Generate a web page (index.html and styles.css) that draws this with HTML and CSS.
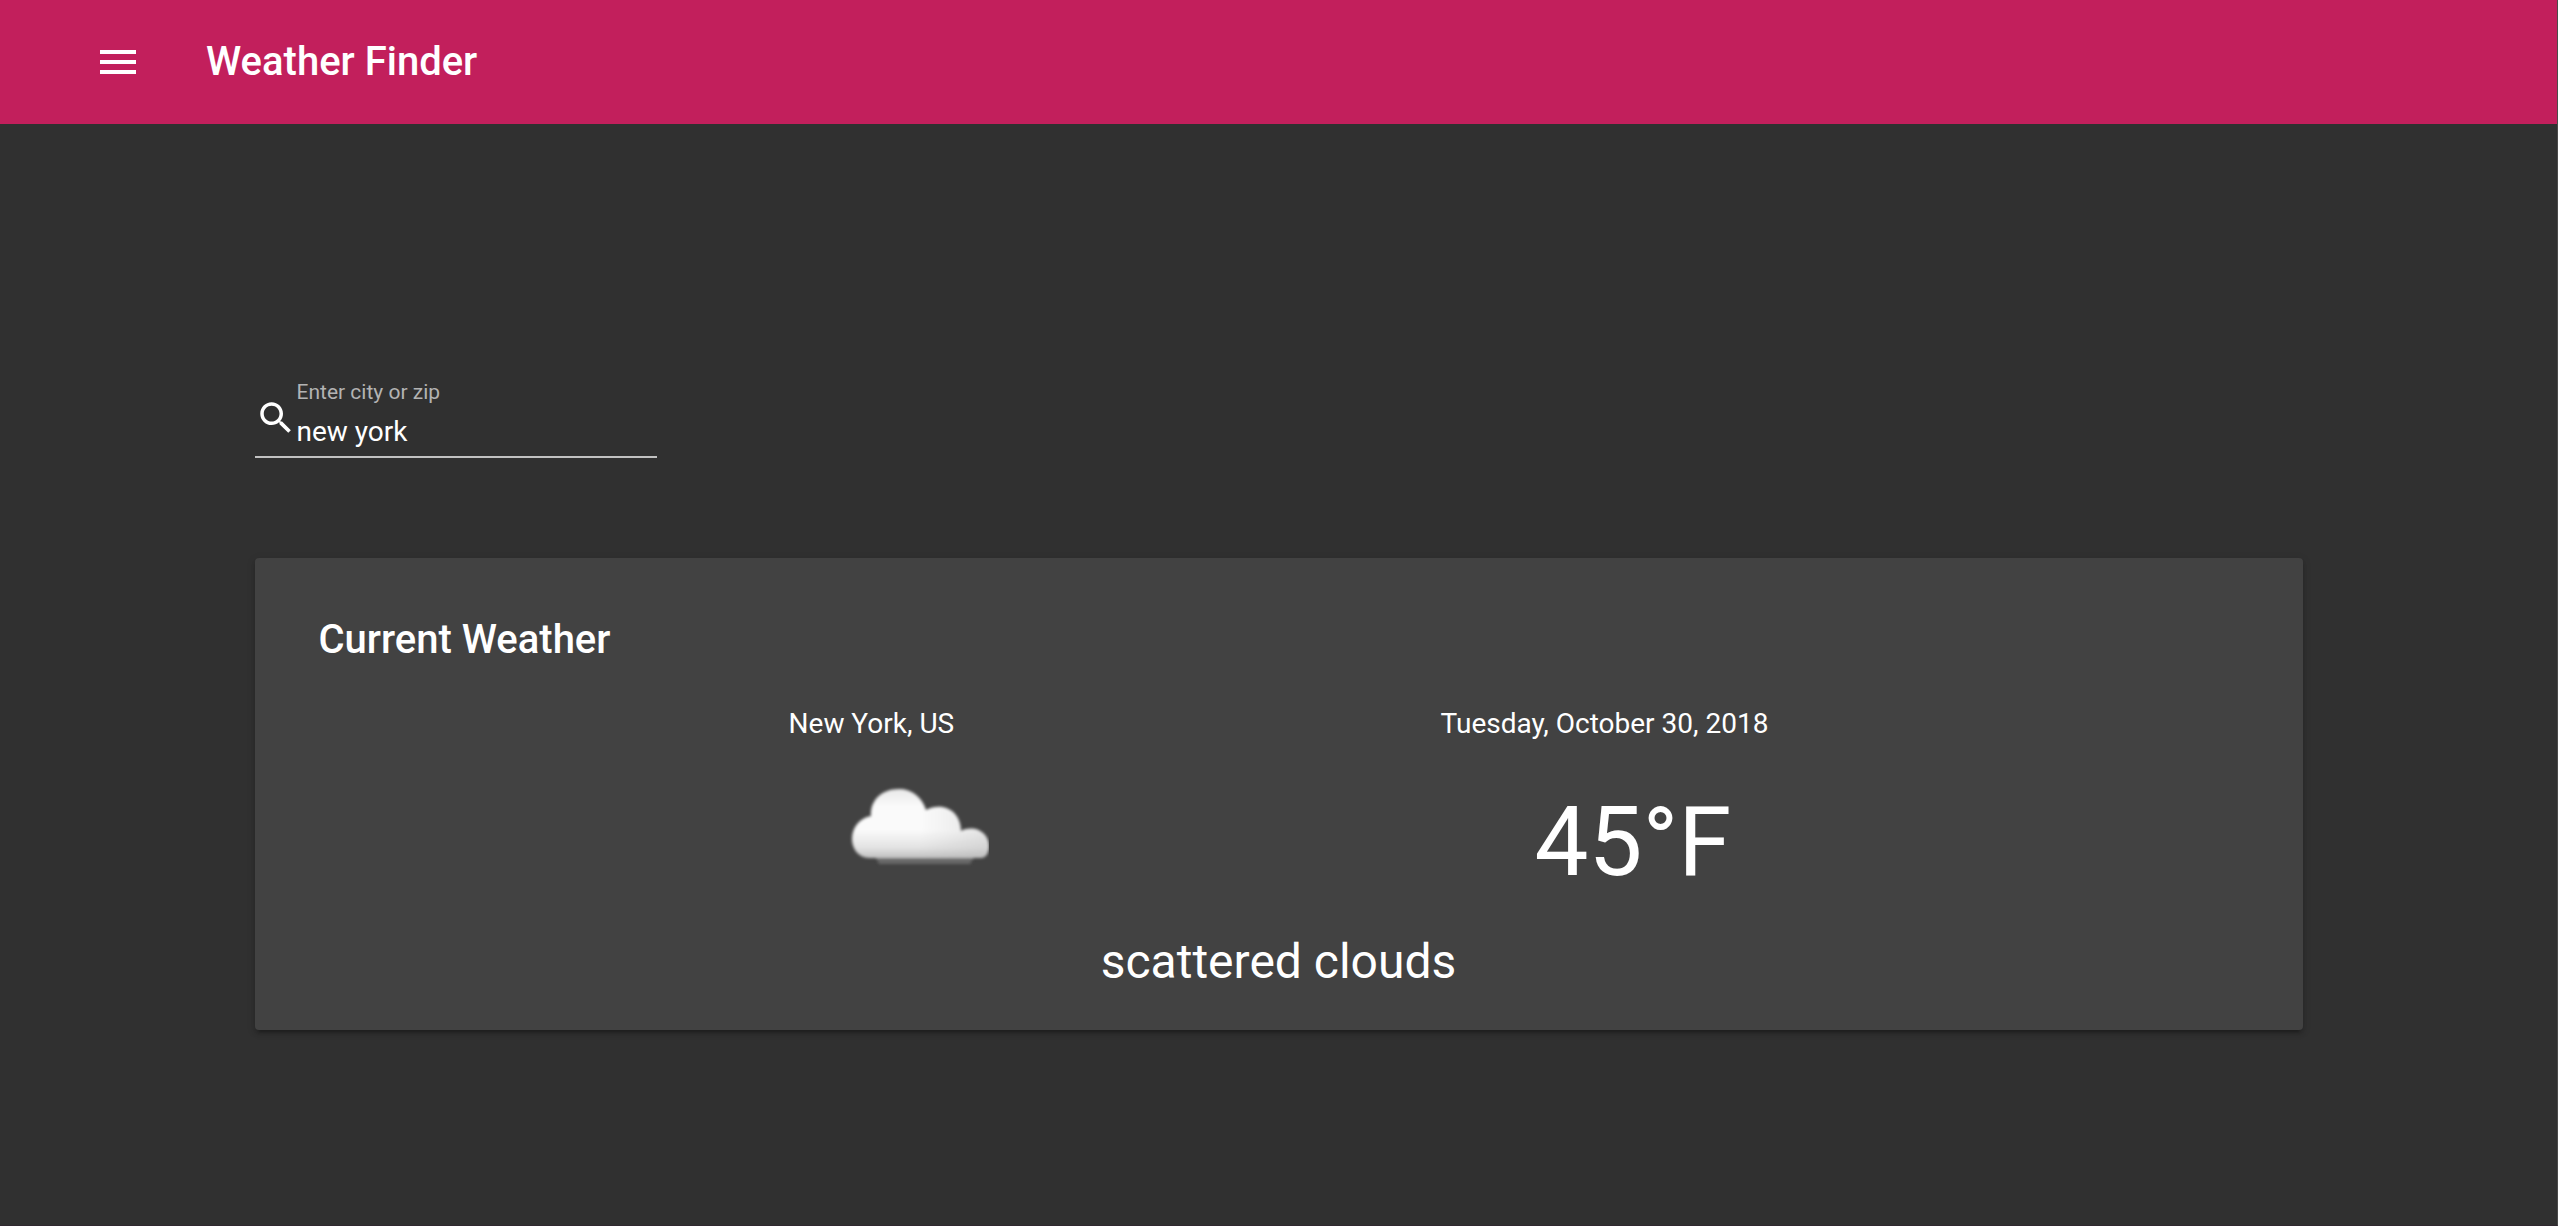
FILE: index.html
```html
<!DOCTYPE html>
<html lang="en">
<head>
<meta charset="utf-8">
<meta name="viewport" content="width=device-width, initial-scale=1">
<title>Weather Finder</title>
<link rel="stylesheet" href="styles.css">
</head>
<body>
<header class="app-bar">
  <button class="menu-button" type="button" aria-label="Open menu">
    <svg class="icon" viewBox="0 0 24 24" aria-hidden="true"><path d="M3 18h18v-2H3v2zm0-5h18v-2H3v2zm0-7v2h18V6H3z"/></svg>
  </button>
  <h1 class="title">Weather Finder</h1>
</header>
<main class="content">
  <form class="search">
    <svg class="search-icon" viewBox="0 0 24 24" aria-hidden="true"><path d="M15.5 14h-.79l-.28-.27C15.41 12.59 16 11.11 16 9.5 16 5.91 13.09 3 9.5 3S3 5.91 3 9.5 5.91 16 9.5 16c1.61 0 3.09-.59 4.23-1.57l.27.28v.79l5 4.99L20.49 19l-4.99-5zm-6 0C7.01 14 5 11.99 5 9.5S7.01 5 9.5 5 14 7.01 14 9.5 11.99 14 9.5 14z"/></svg>
    <div class="field">
      <label class="field-label" for="city">Enter city or zip</label>
      <input class="field-input" id="city" type="text" value="new york">
    </div>
  </form>
  <section class="card">
    <h2 class="title">Current Weather</h2>
    <div class="columns">
      <div class="column">
        <p class="caption">New York, US</p>
        <svg class="cloud" viewBox="0 0 168 120" role="img" aria-label="Scattered clouds">
          <defs>
            <linearGradient id="body" gradientUnits="userSpaceOnUse" x1="0" y1="29" x2="0" y2="98">
              <stop offset="0" stop-color="#e8e8e8"/>
              <stop offset=".25" stop-color="#fafafa"/>
              <stop offset=".6" stop-color="#fafafa"/>
              <stop offset=".85" stop-color="#e2e2e2"/>
              <stop offset="1" stop-color="#c0c0c0"/>
            </linearGradient>
            <linearGradient id="side" x1="0" y1="0" x2="1" y2="0">
              <stop offset=".5" stop-color="#b0b0b0" stop-opacity="0"/>
              <stop offset="1" stop-color="#b0b0b0" stop-opacity=".3"/>
            </linearGradient>
            <filter id="soft" x="-10%" y="-10%" width="120%" height="120%"><feGaussianBlur stdDeviation="1.4"/></filter>
            <path id="shape" d="M48 98C37 98 31 88 31 79C31 67 39 58 50 56C49 40 61 29 78 29C91 29 101 37 105 50C122 41 140 51 140 71C154 64 168 73 168 86C168 93 165 98 160 98Z"/>
          </defs>
          <g filter="url(#soft)">
            <path d="M54 96H154L149 104H58Z" fill="#686868"/>
            <use href="#shape" fill="url(#body)"/>
            <use href="#shape" fill="url(#side)"/>
          </g>
        </svg>
      </div>
      <div class="column">
        <p class="caption">Tuesday, October 30, 2018</p>
        <p class="temperature">45°F</p>
      </div>
    </div>
    <p class="summary">scattered clouds</p>
  </section>
</main>
</body>
</html>
```
FILE: styles.css
```css
* {
  box-sizing: border-box;
}

body {
  margin: 0;
  min-height: 100vh;
  border-right: 1px solid #4a4a4a;
  border-bottom: 1px solid #302830;
  background: #303030;
  color: #fff;
  font-family: Roboto, sans-serif;
  font-size: 28px;
  line-height: 32px;
}

h1, h2, p {
  margin: 0;
}

.title {
  font-size: 40px;
  font-weight: 500;
  line-height: 40px;
}

.app-bar {
  display: flex;
  align-items: center;
  gap: 64px;
  height: 124px;
  padding: 0 94px;
  background: #c21f5c;
}

.menu-button {
  display: flex;
  padding: 0;
  border: 0;
  background: none;
  color: inherit;
}

.icon {
  width: 48px;
  height: 48px;
  fill: currentColor;
}

.content {
  width: 90%;
  max-width: 2048px;
  margin: 0 auto;
  padding-top: 252px;
}

.search {
  display: flex;
  align-items: center;
  width: 402px;
  border-bottom: 2px solid #c1c1c1;
}

.search-icon {
  flex: none;
  width: 42px;
  height: 42px;
  margin-top: 4px;
  fill: currentColor;
}

.field {
  display: flex;
  flex: 1;
  flex-direction: column;
  gap: 8px;
  min-width: 0;
  padding-bottom: 8px;
}

.field-label {
  color: #b3b3b3;
  font-size: 21px;
  line-height: 32px;
}

.field-input {
  width: 100%;
  height: 32px;
  padding: 0;
  border: 0;
  outline: 0;
  background: none;
  color: inherit;
  font: inherit;
}

.card {
  margin-top: 100px;
  padding: 62px 64px 40px;
  border-radius: 4px;
  background: #424242;
  box-shadow: 0 6px 2px -4px rgba(0, 0, 0, .2), 0 4px 4px rgba(0, 0, 0, .14), 0 2px 10px rgba(0, 0, 0, .12);
}

.columns {
  display: flex;
  flex-wrap: wrap;
  justify-content: center;
  column-gap: 452px;
  margin-top: 48px;
}

.column {
  display: flex;
  flex-direction: column;
  min-width: 200px;
}

.cloud {
  align-self: flex-end;
  width: 168px;
  height: 120px;
  margin-top: 20px;
}

.temperature {
  margin-top: 46px;
  padding-left: 94px;
  font-size: 96px;
  line-height: 112px;
}

.summary {
  margin-top: 36px;
  font-size: 48px;
  line-height: 56px;
  text-align: center;
}
```
